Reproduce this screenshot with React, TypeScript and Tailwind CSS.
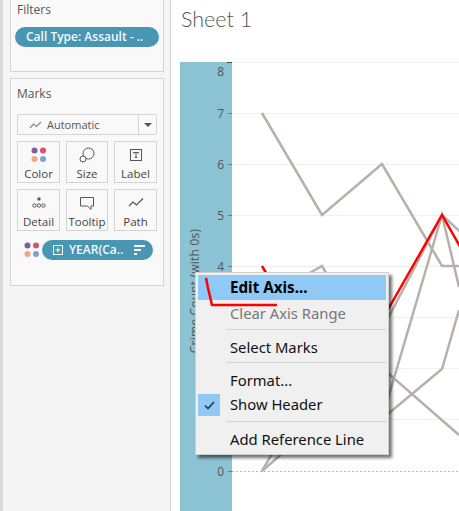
import { ReactNode } from "react";

const tableauFont = "font-['Open_Sans',sans-serif]";

const Dots = () => (
  <svg width="16" height="16" viewBox="0 0 16 16">
    <circle cx="3.5" cy="3.5" r="3" fill="#7b6294" />
    <circle cx="12" cy="3.5" r="3" fill="#e0506c" />
    <circle cx="3.5" cy="12" r="3" fill="#f3a57c" />
    <circle cx="12" cy="12" r="3" fill="#7ba3cf" />
  </svg>
);

const SizeIcon = () => (
  <svg width="16" height="16" viewBox="0 0 16 16" fill="none" stroke="#555" strokeWidth="1">
    <circle cx="9.5" cy="6.5" r="5.5" fill="#f9f9f9" />
    <circle cx="4" cy="12" r="3" fill="#f9f9f9" />
  </svg>
);

const LabelIcon = () => (
  <svg width="16" height="16" viewBox="0 0 16 16" fill="none" stroke="#555">
    <rect x="2.5" y="2.5" width="11" height="11" />
    <path d="M5.5 6.5v-1h5v1M8 5.5v5M6.8 10.5h2.4" />
  </svg>
);

const DetailIcon = () => (
  <svg width="16" height="16" viewBox="0 0 16 16" fill="none" stroke="#555">
    <circle cx="8" cy="4" r="1.7" fill="#555" stroke="none" />
    <circle cx="3.5" cy="10.5" r="1.7" />
    <circle cx="8" cy="10.5" r="1.7" />
    <circle cx="12.5" cy="10.5" r="1.7" />
  </svg>
);

const TooltipIcon = () => (
  <svg width="16" height="16" viewBox="0 0 16 16" fill="none" stroke="#555">
    <path d="M1.5 2.5h13v8.5h-2.5v3.5l-3.5-3.5h-7z" />
  </svg>
);

const PathIcon = () => (
  <svg width="16" height="16" viewBox="0 0 16 16" fill="none" stroke="#555" strokeWidth="1.2">
    <path d="M1 11l4-4 3.5 3L15 3.5" />
  </svg>
);

const Tile = ({ icon, label }: { icon: ReactNode; label: string }) => (
  <div className="flex h-[42px] flex-col items-center border border-[#d4d4d4] pt-[5px]">
    <div className="h-[16px]">{icon}</div>
    <span className="mt-[3px] text-[11.5px] leading-[16px] text-[#444]">{label}</span>
  </div>
);

const Sidebar = () => (
  <aside className={`h-[511px] w-[171px] shrink-0 border-r border-l-[3px] border-r-[#d4d4d4] border-l-[#dcdcdc] bg-[#f5f5f5] pl-[7px] ${tableauFont}`}>
    <section className="h-[72px] w-[154px] border-x border-b border-[#d4d4d4] bg-[#f9f9f9] px-[4px]">
      <h3 className="ml-[2px] text-[12px] leading-[20px] text-[#555]">Filters</h3>
      <div className="mt-[7px] flex h-[20px] w-[144px] items-center rounded-full bg-[#4996b2] pl-[11px] text-[12px] font-semibold text-[#f4f9fb]">
        Call Type: Assault - ..
      </div>
    </section>

    <section className="mt-[6px] h-[208px] w-[154px] border border-[#d4d4d4] bg-[#f9f9f9] px-[6px]">
      <h3 className="mt-[5px] text-[12px] leading-[20px] text-[#555]">Marks</h3>
      <div className="mt-[10px] flex h-[21px] w-[140px] items-center rounded-[2px] border border-[#d4d4d4] text-[#555]">
        <svg className="ml-[11px]" width="13" height="10" viewBox="0 0 13 10" fill="none" stroke="#888" strokeWidth="1.2">
          <path d="M1 8l3.5-4 3 2.5L12 2" />
        </svg>
        <span className="ml-[5px] flex-1 text-[11px] leading-[20px]">Automatic</span>
        <div className="flex h-full w-[18px] items-center justify-center border-l border-[#d4d4d4]">
          <div className="h-0 w-0 border-x-[4px] border-t-[4px] border-x-transparent border-t-[#555]" />
        </div>
      </div>
      <div className="mt-[6px] grid w-[140px] grid-cols-[43px_42px_43px] gap-[6px]">
        <Tile icon={<Dots />} label="Color" />
        <Tile icon={<SizeIcon />} label="Size" />
        <Tile icon={<LabelIcon />} label="Label" />
        <Tile icon={<DetailIcon />} label="Detail" />
        <Tile icon={<TooltipIcon />} label="Tooltip" />
        <Tile icon={<PathIcon />} label="Path" />
      </div>
      <div className="mt-[9px] flex items-center">
        <div className="ml-[7px]">
          <Dots />
        </div>
        <div className="ml-[2px] flex h-[20px] w-[111px] items-center rounded-full bg-[#4996b2] pl-[11px] text-[12px] font-semibold text-[#f4f9fb]">
          <svg width="10" height="10" viewBox="0 0 10 10" fill="none" stroke="#f4f9fb">
            <rect x="0.5" y="0.5" width="9" height="9" />
            <path d="M2.5 5h5M5 2.5v5" />
          </svg>
          <span className="ml-[6px] flex-1">YEAR(Ca..</span>
          <svg className="mr-[8px]" width="11" height="10" viewBox="0 0 11 10" fill="#f4f9fb">
            <rect x="0" y="0" width="11" height="2" />
            <rect x="0" y="4" width="7" height="2" />
            <rect x="0" y="8" width="3" height="2" />
          </svg>
        </div>
      </div>
    </section>
  </aside>
);

const gridYs = [113, 164, 215, 266, 317, 368, 419];
const grayLines = [
  "262,113 322,215 382,164 442,266 470,266",
  "262,471 322,368 382,419 442,215 459,287",
  "262,471 322,419 382,419 442,369 459,310",
  "262,300 322,266 382,368 459,435",
  "442,215 470,241",
  "300,400 382,330 442,215",
];

const Plot = () => (
  <svg className="h-[449px] w-[227px]" viewBox="232 62 227 449" fill="none">
    <line x1="232" x2="459" y1="62.5" y2="62.5" stroke="#f0f0f0" />
    {gridYs.map((y) => (
      <line key={y} x1="232" x2="459" y1={y + 0.5} y2={y + 0.5} stroke="#f0f0f0" />
    ))}
    <line x1="232" x2="459" y1="471.5" y2="471.5" stroke="#bbb" strokeDasharray="2 2" />
    {grayLines.map((points) => (
      <polyline key={points} points={points} stroke="#b9b0ab" strokeWidth="2.5" />
    ))}
    <polyline points="262,266 322,368 382,320 442,215 470,264" stroke="#ff0000" strokeWidth="2.5" />
  </svg>
);

const ticks = [
  { label: "8", y: 71 },
  { label: "7", y: 113 },
  { label: "6", y: 164 },
  { label: "5", y: 215 },
  { label: "4", y: 266 },
  { label: "0", y: 471 },
  { label: "-1", y: 516 },
];

const AxisPane = () => (
  <div className="h-[449px] w-[52px] shrink-0 bg-[#8cc3d4]">
    <svg className="h-[449px] w-[52px]" viewBox="180 62 52 449" fontFamily="'Open Sans', sans-serif">
      <rect x="227" y="62" width="5" height="1" fill="#444" />
      {[113, 164, 215, 266, 471].map((y) => (
        <rect key={y} x="228" y={y} width="4" height="1" fill="#777" />
      ))}
      {ticks.map((t) => (
        <text key={t.label} x="224" y={t.y + 4.5} textAnchor="end" fontSize="12" fill="#555">
          {t.label}
        </text>
      ))}
      <text x="199" y="291" textAnchor="middle" fontSize="12" letterSpacing="0.2" fill="#555" transform="rotate(-90 199 291)">
        Crime Count (with 0s)
      </text>
    </svg>
  </div>
);

const Separator = ({ top }: { top: string }) => <div className={`ml-[28px] h-px bg-[#d2d2d2] ${top}`} />;

const ContextMenu = () => (
  <div className="absolute top-[272px] left-[195px] w-[194px] border border-[#cfcfcf] bg-[#f0f0f0] p-[2px] font-['Noto_Sans',sans-serif] text-[14.8px] text-[#111] shadow-[3px_3px_3px_rgba(0,0,0,0.55)]">
    <div className="flex h-[25px] items-center bg-[#90c8f6] pb-px pl-[32px] text-[15.2px] font-bold text-black">Edit Axis...</div>
    <div className="mt-px flex h-[25px] items-center pb-px pl-[32px] text-[#777]">Clear Axis Range</div>
    <Separator top="mt-[3px]" />
    <div className="mt-[5px] flex h-[25px] items-center pb-px pl-[32px]">Select Marks</div>
    <Separator top="mt-[2px]" />
    <div className="mt-[6px] flex h-[24px] items-center pb-px pl-[32px]">Format...</div>
    <div className="flex h-[24px] items-center">
      <div className="flex h-[22px] w-[22px] items-center justify-center bg-[#90c8f6]">
        <svg width="11" height="9" viewBox="0 0 11 9" fill="none" stroke="#333" strokeWidth="1.6">
          <path d="M1 4.5l3 3 6-6.5" />
        </svg>
      </div>
      <span className="mb-px ml-[10px]">Show Header</span>
    </div>
    <Separator top="mt-[4px]" />
    <div className="mt-[6px] flex h-[24px] items-center pb-px pl-[32px]">Add Reference Line</div>
  </div>
);

const RedMark = () => (
  <svg className="absolute top-[270px] left-[200px]" width="85" height="42" viewBox="200 270 85 42" fill="none">
    <polyline points="206,278 208,288 212,305 277,305" stroke="#ff0000" strokeWidth="2.5" />
  </svg>
);

export default function App() {
  return (
    <div className="relative flex h-[511px] w-[459px] overflow-hidden bg-white">
      <Sidebar />
      <main className="flex-1 pl-[9px]">
        <h1 className="h-[62px] pt-[6px] pl-[1px] font-['Lato',sans-serif] text-[21.5px] leading-[27px] font-light text-[#555]">
          Sheet 1
        </h1>
        <div className="flex">
          <AxisPane />
          <Plot />
        </div>
      </main>
      <ContextMenu />
      <RedMark />
    </div>
  );
}
